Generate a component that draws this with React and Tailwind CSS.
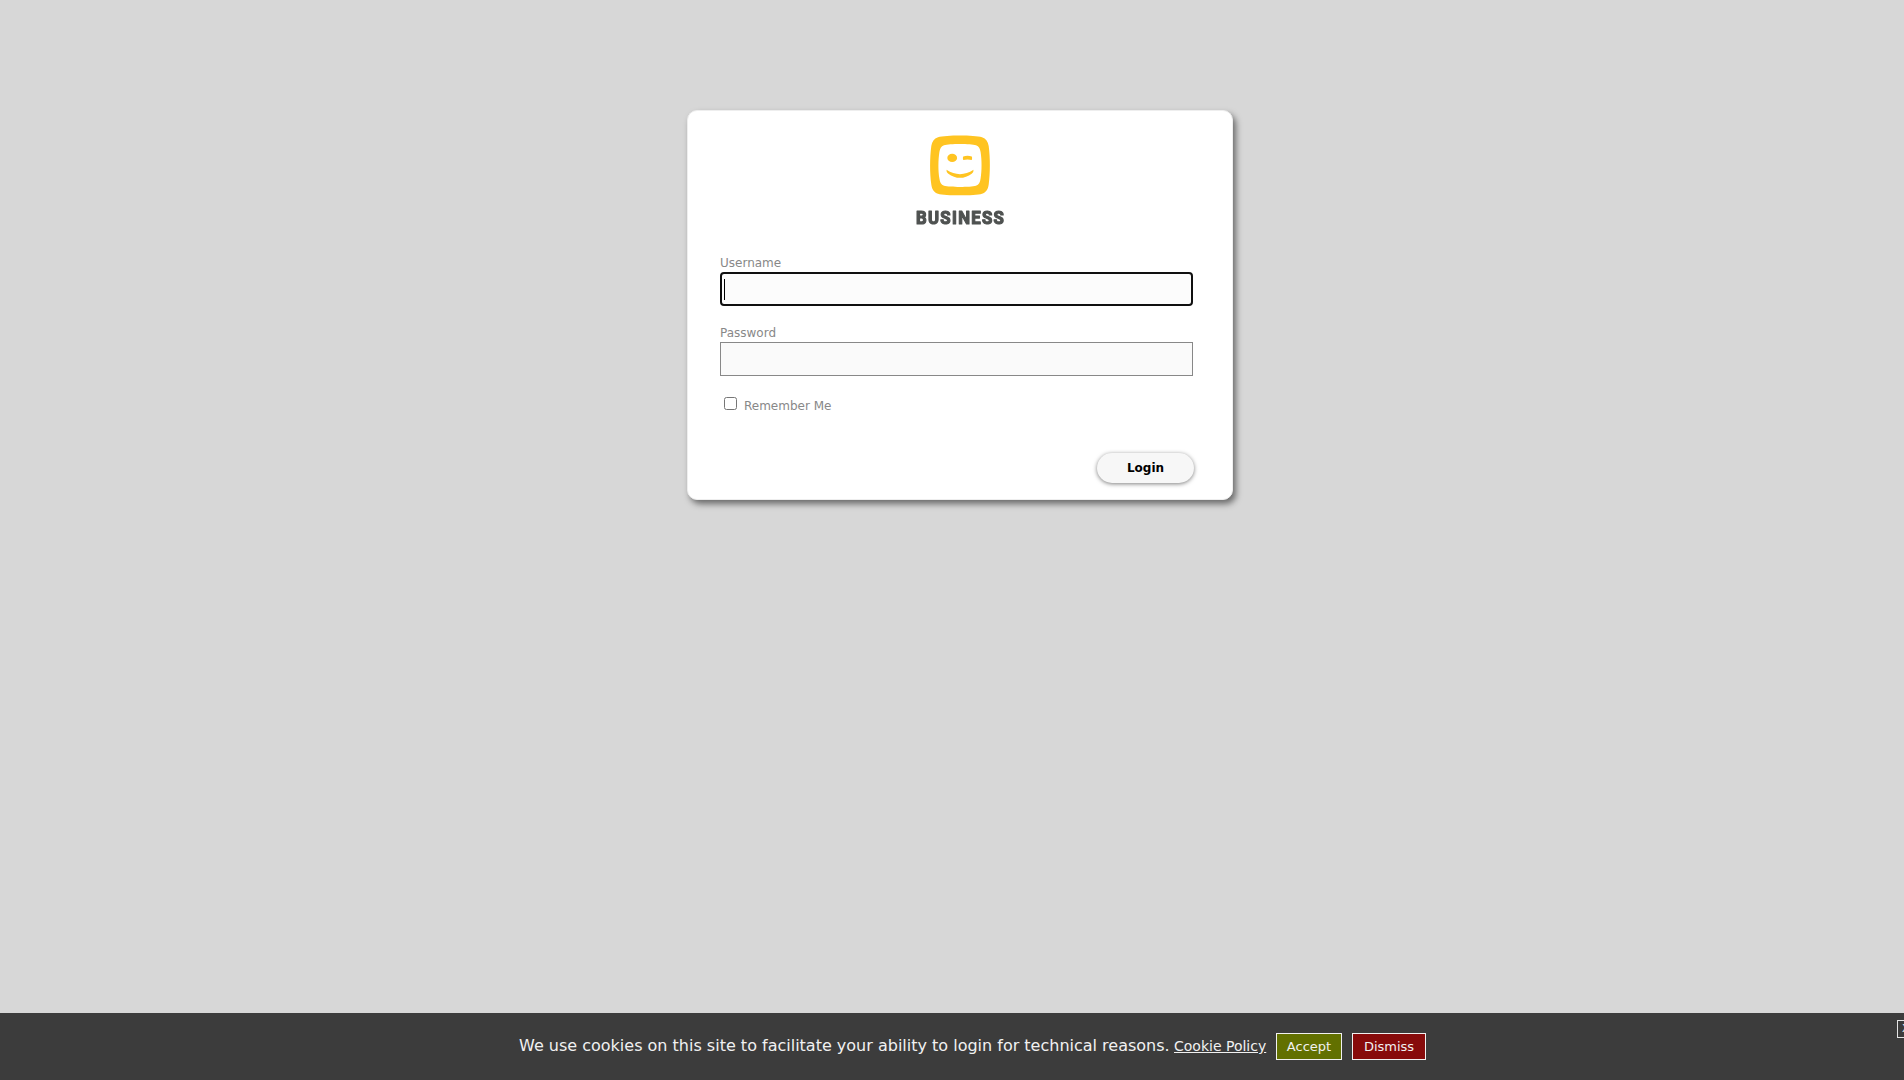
function Logo() {
  return (
    <svg width="112" height="98" viewBox="904 133 112 98" className="block shrink-0 overflow-visible will-change-transform" role="img" aria-label="Business">
      <path
        d="M960 135.5C969 135.5 978 136 982 137.200C986 138.500 988 141.500 988.700 146C990.300 158 990.300 173 988.700 184.500C988 189.500 986 192.500 982 193.700C975 195.900 945 195.900 938 193.700C934 192.500 932 189.500 931.300 184.500C929.700 173 929.700 158 931.300 146C932 141.500 934 138.500 938 137.200C942 136 951 135.500 960 135.500Z"
        fill="#ffc421"
      />
      <path
        d="M960 144C967 144 973 144.300 976 145.300C979 146.300 980 149 980.600 152C981.900 160 981.900 171 980.600 178.500C980 182.500 979 184.800 976 185.800C970 187.400 950 187.400 944 185.800C941 184.800 940 182.500 939.400 178.500C938.100 171 938.100 160 939.400 152C940 149 941 146.300 944 145.300C947 144.300 953 144 960 144Z"
        fill="#fff"
      />
      <ellipse cx="952.2" cy="157.900" rx="4.900" ry="4.100" fill="#ffc421" />
      <path d="M963.200 156.500Q967.500 155.200 971.800 156.500Q972.500 158 971.800 159.900Q967.500 158.900 963.200 159.900Q962.500 158 963.200 156.500Z" fill="#ffc421" />
      <path d="M946.500 169.800Q960 178.500 973.500 169.800Q973.800 172 972 173.400Q960 182.300 948 173.400Q946.200 172 946.500 169.800Z" fill="#ffc421" />
      <g transform="translate(916 224.200) scale(0.94 1)">
        <text
          x="0"
          y="0"
          textLength="93.5"
          lengthAdjust="spacing"
          fill="#4f5251"
          stroke="#4f5251"
          strokeWidth="1.200"
          strokeLinejoin="round"
          fontFamily="Roboto, sans-serif"
          fontWeight="700"
          fontSize="17.8"
        >
          BUSINESS
        </text>
      </g>
    </svg>
  );
}

export default function App() {
  return (
    <div className="flex h-screen flex-col overflow-hidden bg-[#d7d7d7] font-['DejaVu_Sans',sans-serif]">
      <main className="flex-1 pt-[110px]">
        <form
          className="ml-[687px] flex h-[390px] w-[546px] flex-col rounded-[10px] border border-[#eee] bg-white px-8 pt-[22px] text-xs text-[#888] shadow-[3px_4px_6px_rgba(0,0,0,0.5)]"
          onSubmit={(e) => e.preventDefault()}
        >
          <div className="flex h-[98px] justify-center">
            <Logo />
          </div>
          <label htmlFor="user" className="mt-[24px] h-[16px] leading-[16px]">Username</label>
          <div className="relative mt-[1px] h-[34px] w-[473px]">
            <input
              id="user"
              autoFocus
              className="h-full w-full rounded-[4px] border-2 border-[#101010] bg-[#fcfcfc] px-[2px] text-lg text-black caret-transparent outline-none"
            />
            <span className="absolute top-[7px] left-[4px] h-[21px] w-px bg-black" />
          </div>
          <label htmlFor="pass" className="mt-[19px] h-[16px] leading-[16px]">Password</label>
          <input
            id="pass"
            type="password"
            className="mt-[1px] h-[34px] w-[473px] border border-[#888] bg-[#fafafa] px-[3px] text-lg text-black outline-none"
          />
          <div className="mt-[21px] flex items-start pl-[4px]">
            <input id="remember" type="checkbox" className="h-[13px] w-[13px]" />
            <label htmlFor="remember" className="ml-[7px] mt-px leading-[16px]">Remember Me</label>
          </div>
          <button className="mt-[39px] ml-[377px] h-[30px] w-[97px] rounded-full bg-[#f7f7f7] text-xs font-bold text-black shadow-[0_1px_4px_rgba(0,0,0,0.5)]">
            Login
          </button>
        </form>
      </main>
      <footer className="flex h-[67px] items-start overflow-hidden bg-[#3c3c3c] text-[#f1f1f1]">
        <p className="ml-[519px] mt-[21px] w-[655px] shrink-0 whitespace-nowrap text-base leading-[23px]">
          We use cookies on this site to facilitate your ability to login for technical reasons.
        </p>
        <a href="#" className="mt-[21px] w-[92px] shrink-0 whitespace-nowrap text-sm leading-6 underline">Cookie Policy</a>
        <button className="ml-[10px] mt-[20px] h-[27px] w-[66px] shrink-0 border border-[#f1f1f1] bg-[#627000] text-[13px]">Accept</button>
        <button className="ml-[10px] mt-[20px] h-[27px] w-[74px] shrink-0 border border-[#f1f1f1] bg-[#870b0b] text-[13px]">Dismiss</button>
        <button className="ml-[471px] mt-[7px] h-[18px] w-[18px] shrink-0 border border-[#e4e4e4] pl-[4px] text-left text-[11px] leading-4">X</button>
      </footer>
    </div>
  );
}
